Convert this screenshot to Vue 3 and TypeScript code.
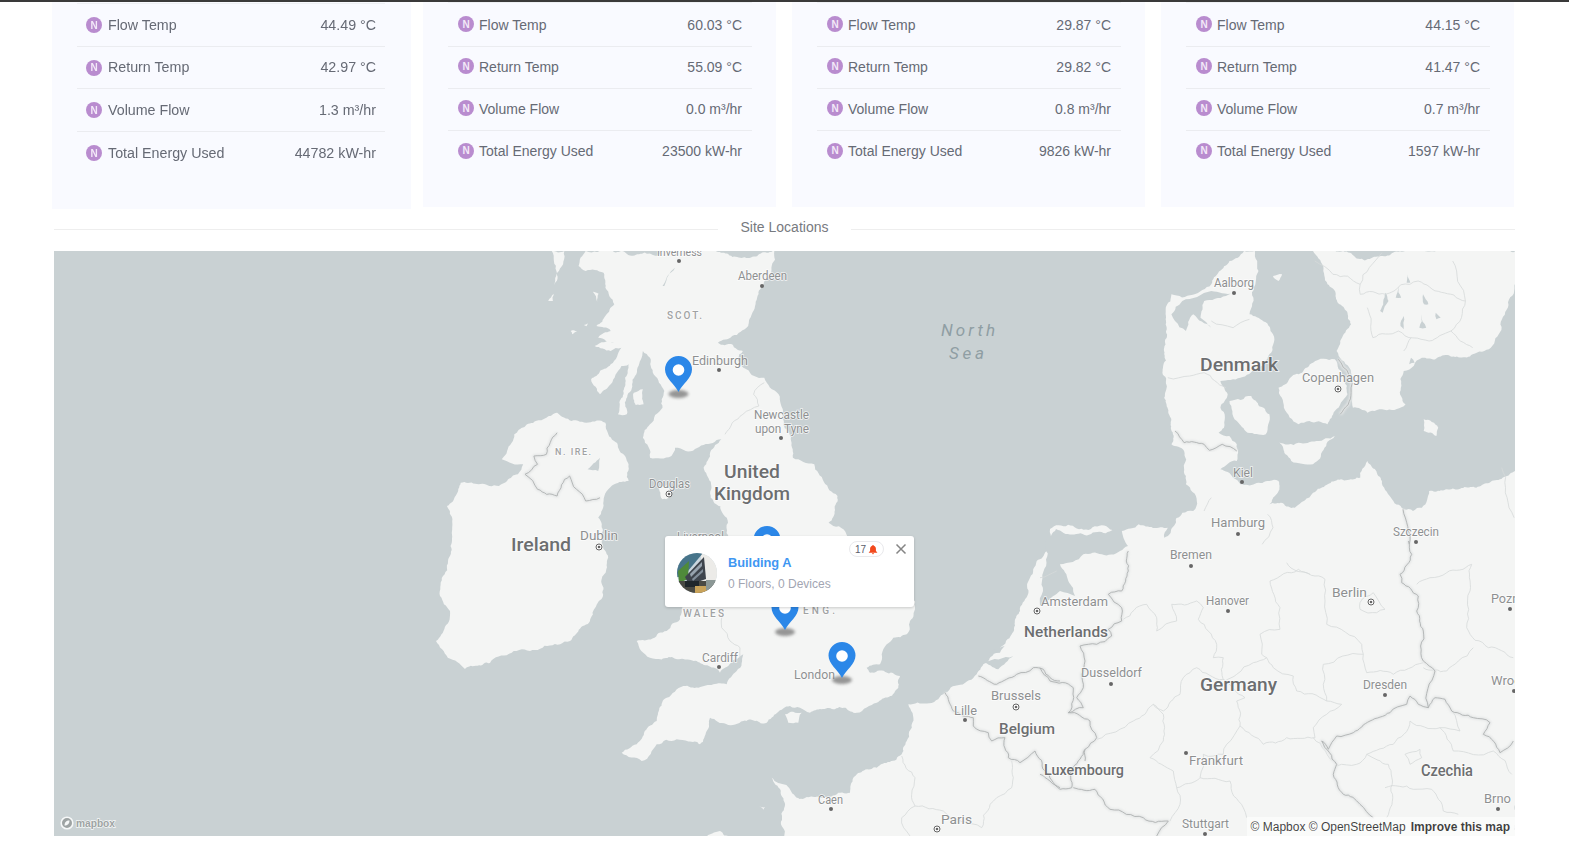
<script setup lang="ts">
type Row = { label: string; value: string }
const mk = (a: string, b: string, c: string, d: string): Row[] => [
  { label: 'Flow Temp', value: a },
  { label: 'Return Temp', value: b },
  { label: 'Volume Flow', value: c },
  { label: 'Total Energy Used', value: d }
]
const cards = [
  { cls: 'c1', rows: mk('44.49 °C', '42.97 °C', '1.3 m³/hr', '44782 kW-hr') },
  { cls: 'c2', rows: mk('60.03 °C', '55.09 °C', '0.0 m³/hr', '23500 kW-hr') },
  { cls: 'c3', rows: mk('29.87 °C', '29.82 °C', '0.8 m³/hr', '9826 kW-hr') },
  { cls: 'c4', rows: mk('44.15 °C', '41.47 °C', '0.7 m³/hr', '1597 kW-hr') }
]

const conv = (a: number[], ox: number, oy: number, sx: number, sy: number): number[] => {
  const out: number[] = []
  for (let i = 0; i < a.length; i += 2) out.push(ox + a[i] / sx, oy + a[i + 1] / sy)
  return out
}
const Z5 = (...a: number[]) => conv(a, 400, 250, 2.8, 3)
const Z6 = (...a: number[]) => conv(a, 950, 250, 2.755, 3)
const Z7 = (...a: number[]) => conv(a, 600, 540, 3, 3)
const Z8 = (...a: number[]) => conv(a, 1040, 540, 3, 3)

// Deterministic midpoint displacement: gives coasts and borders their irregular edge.
let seed = 4711
const rnd = () => {
  seed = (seed * 16807) % 2147483647
  return seed / 2147483647 - 0.5
}
const rough = (a: number[], k: number, min: number, closed: boolean): string => {
  const out: number[] = []
  const seg = (x1: number, y1: number, x2: number, y2: number) => {
    const dx = x2 - x1
    const dy = y2 - y1
    const len = Math.hypot(dx, dy)
    if (len < min) {
      out.push(x1, y1)
      return
    }
    const d = rnd() * k * 2
    const mx = (x1 + x2) / 2 - dy * d
    const my = (y1 + y2) / 2 + dx * d
    seg(x1, y1, mx, my)
    seg(mx, my, x2, y2)
  }
  const n = a.length
  for (let i = 0; i + 3 < n; i += 2) seg(a[i], a[i + 1], a[i + 2], a[i + 3])
  if (closed) seg(a[n - 2], a[n - 1], a[0], a[1])
  else out.push(a[n - 2], a[n - 1])
  return out.map((v) => v.toFixed(1)).join(' ')
}

const landRaw: number[][] = [
  [
    ...Z5(1048, 0, 1040, 50, 1018, 100, 1000, 140, 985, 190, 975, 225, 930, 255, 890, 275, 930, 280, 960, 300, 945, 325, 970, 355, 1020, 380, 1060, 430, 1070, 490, 1095, 570, 1100, 620, 1160, 640, 1225, 735, 1200, 815, 1250, 850, 1260, 900),
    880, 570, 915, 600,
    ...Z7(945, 200, 930, 240, 920, 280, 880, 290, 860, 310, 845, 340, 840, 370, 800, 380, 810, 395, 900, 405, 895, 440, 830, 485, 770, 515, 700, 505, 630, 515, 600, 500, 570, 495, 500, 545, 430, 540, 330, 530, 320, 570, 300, 610, 230, 595, 170, 610, 125, 660, 65, 635, 110, 610, 170, 540, 200, 470, 250, 435, 340, 430, 380, 430, 410, 390, 430, 340, 360, 395, 290, 360, 220, 350, 150, 350, 110, 300, 200, 270, 240, 235, 245, 205),
    682, 600, 690, 560,
    ...Z5(920, 860, 915, 800, 870, 740, 850, 650, 900, 565, 800, 600, 770, 590, 760, 615, 700, 620, 680, 560, 700, 520, 735, 470, 740, 420, 710, 370, 700, 320, 680, 300, 665, 350, 650, 400, 635, 490, 610, 490, 625, 420, 640, 340, 620, 345, 590, 400, 560, 430, 535, 385, 590, 340, 620, 290, 590, 300, 545, 285, 600, 275, 555, 260, 590, 240, 550, 225, 600, 160, 575, 110, 570, 65, 520, 60, 500, 45, 520, 0)
  ],
  Z5(425, 0, 460, 0, 445, 60, 432, 105, 438, 60),
  Z5(415, 150, 430, 128, 428, 150),
  Z5(515, 222, 532, 208, 522, 226),
  Z5(540, 122, 556, 128, 552, 152),
  Z5(478, 240, 496, 240, 482, 250),
  Z5(655, 425, 680, 415, 682, 460, 660, 462),
  Z5(725, 705, 750, 700, 755, 740, 735, 745),
  [
    ...Z5(440, 485, 480, 510, 575, 515, 615, 600, 640, 640, 640, 690, 600, 700, 570, 750, 555, 800, 565, 870),
    606, 570, 603, 595, 590, 620, 570, 640, 530, 650, 490, 662, 465, 668, 436, 640, 450, 610, 440, 595, 448, 560, 452, 530, 447, 505,
    ...Z5(170, 695, 250, 705, 300, 690, 330, 670, 345, 640, 285, 625, 300, 600, 320, 550, 380, 510, 410, 500)
  ],
  [
    ...Z7(550, 890, 515, 710, 590, 770, 660, 770, 750, 755, 760, 710, 830, 680, 905, 640, 920, 600, 925, 490, 1030, 460, 1130, 400, 1150, 370, 1200, 320, 1235, 280, 1260, 210, 1290, 110, 1310, 60, 1340, 30),
    1050, 528, 1122, 530,
    ...Z6(520, 820, 600, 830, 590, 860, 640, 785, 670, 780, 680, 750, 650, 700, 645, 600, 610, 580, 590, 440, 590, 290, 595, 210, 610, 130, 720, 100, 770, 30, 810, 0, 840, 0, 850, 60, 825, 190, 890, 250, 880, 310, 800, 380, 745, 390, 765, 430, 745, 470, 755, 530, 740, 545, 790, 580, 790, 630, 745, 655, 780, 680, 800, 700, 880, 690, 905, 690, 880, 760, 950, 770, 1000, 725, 1060, 690, 1130, 680, 1150, 630, 1190, 690, 1215, 740, 1250, 775, 1300, 770, 1320, 720, 1450, 710, 1570, 640),
    1520, 840, 780, 840
  ],
  Z7(315, 890, 360, 870, 390, 890),
  Z7(475, 795, 495, 798, 490, 806),
  Z7(555, 520, 605, 515, 595, 545, 565, 545),
  Z6(770, 450, 830, 435, 880, 490, 870, 550, 820, 545, 790, 510),
  Z6(905, 410, 970, 365, 1000, 335, 1060, 325, 1085, 380, 1095, 430, 1060, 480, 1040, 520, 990, 510, 960, 520, 920, 470),
  Z6(905, 570, 960, 575, 1010, 570, 1060, 555, 1000, 640, 940, 630),
  Z6(1305, 505, 1345, 530, 1340, 555, 1305, 540),
  Z6(1000, 0, 1040, 100, 1105, 220, 1080, 260, 1065, 300, 1100, 350, 1110, 470, 1150, 485, 1255, 460, 1250, 360, 1300, 320, 1440, 310, 1490, 290, 1570, 60, 1570, 0),
  Z6(890, 75, 915, 70, 905, 90),
  Z6(270, 885, 350, 865, 430, 840, 430, 846, 350, 871, 270, 891)
]

const waterRaw: number[][] = [
  [1045, 540, 1056, 528, 1122, 528, 1128, 545, ...Z8(240, 30, 130, 40, 60, 70, 85, 120, 105, 165, 60, 150, 20, 180, 0, 195), 1043, 590],
  Z6(610, 190, 640, 150, 720, 120, 780, 125, 760, 135, 700, 150, 690, 200, 720, 230, 670, 190, 650, 240, 620, 210),
  Z6(1185, 180, 1200, 125, 1208, 150, 1192, 185),
  Z6(1228, 140, 1235, 105, 1243, 140),
  Z6(1293, 230, 1300, 190, 1312, 230),
  Z6(1303, 130, 1318, 160, 1306, 160),
  Z6(1241, 225, 1250, 195, 1250, 235),
  Z6(1338, 185, 1352, 200, 1340, 205),
  Z6(1260, 70, 1268, 95, 1258, 95),
  Z6(1270, 320, 1280, 335, 1265, 340),
  Z5(770, 50, 735, 105, 740, 105),
  Z5(525, 655, 560, 620, 555, 660),
  Z7(1150, 360, 1240, 345, 1195, 385),
  Z7(1160, 330, 1220, 310, 1200, 335)
]

const strongRaw: number[][] = [
  Z8(1105, 0, 1115, 40, 1080, 100, 1085, 125, 1135, 165, 1130, 210, 1150, 270, 1150, 360, 1185, 390, 1165, 500),
  Z8(1165, 500, 1135, 490, 1110, 465, 1100, 490, 1050, 515, 990, 540, 940, 575, 890, 585, 865, 625, 845, 600, 890, 670, 880, 700, 910, 760, 960, 790, 1000, 830),
  Z8(1165, 500, 1185, 470, 1215, 475, 1235, 510, 1300, 530, 1350, 545, 1330, 580, 1380, 635, 1420, 600),
  Z8(265, 30, 265, 90, 245, 150, 205, 160, 245, 200, 245, 240, 205, 265, 215, 285, 170, 310, 120, 315, 135, 360, 130, 440, 110, 470, 130, 500, 85, 515),
  Z8(85, 515, 150, 540, 170, 590, 135, 625, 135, 660),
  Z8(0, 380, 30, 420, 100, 440, 85, 515),
  Z7(1135, 405, 1190, 430, 1250, 400, 1300, 380, 1330, 385, 1350, 410, 1380, 420),
  Z7(1035, 455, 1060, 510, 1120, 530, 1120, 555, 1165, 575, 1175, 600, 1215, 590, 1225, 650, 1260, 665, 1305, 630, 1335, 690, 1380, 740),
  Z8(135, 625, 100, 680, 95, 740, 60, 745, 30, 720, 0, 700),
  Z8(100, 740, 165, 745, 210, 805, 310, 830, 385, 840, 350, 885),
  Z6(620, 540, 645, 575, 700, 580, 715, 598, 750, 580, 790, 600),
  Z6(1070, 325, 1105, 425, 1075, 490),
  Z6(1248, 775, 1265, 880),
  Z5(440, 545, 410, 610, 375, 615, 385, 640, 350, 670, 385, 715, 440, 735, 475, 675, 520, 750, 560, 740)
]

const faintRaw: number[][] = [
  Z8(250, 235, 320, 190, 350, 230, 350, 270, 410, 240, 395, 190, 470, 180, 490, 200, 475, 235, 530, 310, 520, 350, 550, 350, 555, 420, 590, 400, 640, 365, 680, 350, 700, 380, 760, 405, 770, 450, 860, 480, 905, 490, 860, 520, 820, 560, 825, 590, 740, 590, 670, 610, 600, 555, 590, 480, 615, 470, 550, 415, 470, 380, 430, 410, 420, 460, 370, 510, 340, 490, 280, 540, 170, 595),
  Z8(775, 85, 690, 120, 720, 200, 720, 265, 660, 280, 665, 340, 680, 350),
  Z8(775, 85, 855, 115, 855, 180, 860, 250, 965, 310, 970, 340, 850, 370, 850, 430, 860, 480),
  Z8(970, 340, 980, 395, 1060, 400, 1150, 365),
  Z8(600, 555, 560, 610, 550, 640, 490, 640, 480, 710, 410, 740, 420, 790, 390, 840),
  Z8(340, 490, 370, 520, 370, 600, 330, 650, 400, 690, 410, 740),
  Z8(480, 710, 570, 720, 610, 800, 620, 830),
  Z8(820, 590, 890, 670),
  Z8(980, 640, 1060, 610, 1110, 540, 1200, 560, 1240, 630, 1360, 630, 1415, 700),
  Z8(980, 640, 950, 670, 890, 675),
  Z8(1045, 670, 1040, 830),
  Z8(1035, 740, 1120, 745, 1175, 745, 1210, 810, 1255, 820),
  Z8(980, 640, 1045, 670),
  Z8(1235, 510, 1260, 570, 1200, 560),
  Z8(1095, 640, 1140, 625, 1145, 650, 1110, 670, 1095, 640),
  Z8(1130, 130, 1170, 110, 1220, 95, 1295, 70, 1290, 150, 1280, 260, 1345, 320, 1420, 350),
  Z8(1150, 380, 1220, 390, 1255, 360, 1300, 320),
  Z8(740, 65, 810, 100),
  Z8(960, 185, 1000, 155, 1035, 205, 1010, 215, 960, 205, 960, 185),
  Z8(0, 110, 50, 90),
  Z7(905, 645, 945, 710, 935, 760, 945, 795, 905, 830, 930, 885),
  Z7(945, 795, 1030, 810, 1145, 860, 1170, 790, 1190, 770, 1235, 740, 1235, 660),
  Z7(370, 215, 365, 260, 390, 300, 420, 320, 420, 350),
  Z5(1020, 395, 990, 430, 1005, 465, 960, 490, 910, 550),
  Z6(1005, 30, 1055, 70, 1130, 100, 1190, 5),
  Z6(1130, 100, 1130, 130, 1200, 130, 1290, 90, 1420, 150, 1380, 240, 1440, 290),
  Z6(1150, 170, 1165, 260, 1235, 240, 1320, 270, 1380, 240),
  Z6(1270, 260, 1250, 300),
  Z6(1385, 30, 1420, 150),
  Z6(600, 380, 660, 375, 700, 365, 760, 410),
  Z6(720, 210, 780, 230, 825, 205),
  Z6(875, 790, 890, 830, 860, 880),
  Z6(720, 740, 700, 780),
  Z6(1520, 650, 1540, 770, 1554, 800)
]

const land = landRaw.map((a) => rough(a, 0.14, 3, true))
const water = waterRaw.map((a) => rough(a, 0.12, 4, true))
const strong = strongRaw.map((a) => rough(a, 0.13, 5, false))
const faint = faintRaw.map((a) => rough(a, 0.12, 6, false))

type Label = [string, number, number, number, number, string]
const labels: Label[] = [
  ['Inverness', 657, 255, 45, 11, 'c'],
  ['Aberdeen', 738, 279, 49, 12, 'c'],
  ['SCOT.', 667, 318, 35, 10, 'r'],
  ['Edinburgh', 692, 364, 56, 13, 'c'],
  ['North', 941, 335, 54, 17, 's'],
  ['Sea', 949, 358, 35, 17, 's'],
  ['Newcastle', 754, 418, 55, 12, 'c'],
  ['upon Tyne', 755, 432, 54, 12, 'c'],
  ['N. IRE.', 555, 454, 36, 9, 'r'],
  ['United', 724, 477, 56, 19, 'k'],
  ['Kingdom', 714, 499, 76, 19, 'k'],
  ['Douglas', 649, 487, 41, 12, 'c'],
  ['Ireland', 511, 550, 60, 19, 'k'],
  ['Dublin', 580, 539, 38, 13, 'c'],
  ['Liverpool', 677, 540, 47, 12, 'c'],
  ['WALES', 683, 616, 41, 10, 'r'],
  ['ENG.', 803, 613, 32, 10, 'r'],
  ['Cardiff', 702, 661, 36, 12, 'c'],
  ['London', 794, 678, 41, 13, 'c'],
  ['Caen', 818, 803, 25, 12, 'c'],
  ['Paris', 941, 823, 31, 13, 'c'],
  ['Lille', 954, 714, 23, 12, 'c'],
  ['Brussels', 991, 699, 50, 13, 'c'],
  ['Belgium', 999, 733, 56, 15, 'k'],
  ['Luxembourg', 1044, 774, 80, 14, 'k'],
  ['Amsterdam', 1041, 605, 67, 13, 'c'],
  ['Netherlands', 1024, 636, 84, 15, 'k'],
  ['Dusseldorf', 1081, 676, 61, 13, 'c'],
  ['Germany', 1200, 690, 77, 19, 'k'],
  ['Hanover', 1206, 604, 43, 12, 'c'],
  ['Bremen', 1170, 558, 42, 12, 'c'],
  ['Hamburg', 1211, 526, 54, 13, 'c'],
  ['Kiel', 1233, 476, 20, 12, 'c'],
  ['Szczecin', 1393, 535, 46, 12, 'c'],
  ['Berlin', 1332, 596, 35, 13, 'c'],
  ['Dresden', 1363, 688, 44, 12, 'c'],
  ['Poznan', 1491, 602, 42, 12, 'c'],
  ['Wroclaw', 1491, 684, 50, 12, 'c'],
  ['Frankfurt', 1189, 764, 54, 13, 'c'],
  ['Czechia', 1421, 775, 52, 16, 'k'],
  ['Brno', 1484, 802, 27, 12, 'c'],
  ['Stuttgart', 1182, 827, 47, 12, 'c'],
  ['Aalborg', 1214, 286, 40, 12, 'c'],
  ['Denmark', 1200, 370, 78, 19, 'k'],
  ['Copenhagen', 1302, 381, 72, 13, 'c']
]
const spaced = (kind: string) => (kind === 'r' || kind === 's' ? 'spacing' : 'spacingAndGlyphs')

const dots: [number, number][] = [
  [679, 260], [762, 285], [719, 369], [781, 437], [719, 666], [831, 808], [965, 719], [1111, 683],
  [1228, 610], [1191, 565], [1238, 533], [1242, 481], [1416, 541], [1385, 694], [1510, 608], [1514, 690],
  [1186, 752], [1498, 808], [1205, 833], [1234, 292]
]
const caps: [number, number][] = [
  [669, 493], [599, 546], [937, 828], [1016, 706], [1037, 610], [1371, 601], [1338, 388]
]
const pins: [number, number][] = [
  [678.5, 391], [767, 561], [785, 629], [842, 677]
]
</script>

<template>
  <div class="page">
    <div class="topbar"></div>
    <div class="cards">
      <section v-for="card in cards" :key="card.cls" class="card" :class="card.cls">
        <ul class="list">
          <li v-for="row in card.rows" :key="row.label" class="row">
            <span class="name"><i class="badge-n">N</i>{{ row.label }}</span>
            <span class="val">{{ row.value }}</span>
          </li>
        </ul>
      </section>
    </div>

    <div class="divider">
      <span class="rule"></span>
      <span class="divider-text">Site Locations</span>
      <span class="rule"></span>
    </div>

    <div class="map">
      <svg class="map-svg" viewBox="54 250 1461 585" width="1461" height="585">
        <defs>
          <filter id="soft" x="-60%" y="-100%" width="220%" height="300%">
            <feGaussianBlur stdDeviation="1.6" />
          </filter>
          <filter id="halo" x="-5%" y="-5%" width="110%" height="110%">
            <feGaussianBlur stdDeviation="0.9" />
          </filter>
        </defs>
        <rect x="54" y="250" width="1461" height="585" fill="#c9d1d3" />
        <polygon v-for="(p, i) in land" :key="'l' + i" :points="p" fill="#f4f5f4" />
        <polygon v-for="(p, i) in water" :key="'w' + i" :points="p" fill="#c9d1d3" />
        <g fill="none" stroke-linejoin="round">
          <polyline v-for="(p, i) in faint" :key="'f' + i" :points="p" stroke="#d6d9d9" stroke-width="0.8" />
          <polyline v-for="(p, i) in strong" :key="'h' + i" :points="p" stroke="#e4e6e6" stroke-width="3.2" filter="url(#halo)" />
          <polyline v-for="(p, i) in strong" :key="'t' + i" :points="p" stroke="#afb2b2" stroke-width="0.9" />
        </g>
        <circle v-for="(d, i) in dots" :key="'d' + i" :cx="d[0]" :cy="d[1]" r="2" fill="#666" />
        <g v-for="(d, i) in caps" :key="'c' + i">
          <circle :cx="d[0]" :cy="d[1]" r="3" fill="#fff" stroke="#666" stroke-width="1" />
          <circle :cx="d[0]" :cy="d[1]" r="1.3" fill="#666" />
        </g>
        <text
          v-for="l in labels"
          :key="l[0]"
          :class="'lbl lbl-' + l[5]"
          :x="l[1]"
          :y="l[2]"
          :textLength="l[3]"
          :font-size="l[4]"
          :lengthAdjust="spaced(l[5])"
        >{{ l[0] }}</text>
        <g v-for="(p, i) in pins" :key="'p' + i" :transform="`translate(${p[0]} ${p[1]})`">
          <ellipse cx="0" cy="2" rx="10" ry="4" fill="#6d6d6d" opacity="0.7" filter="url(#soft)" />
          <path d="M0 0C-4-8-13.5-14-13.5-22.5A13.5 13.5 0 1 1 13.5-22.5C13.5-14 4-8 0 0Z" fill="#2b87e8" />
          <circle cx="0" cy="-22" r="5.8" fill="#fff" />
        </g>
      </svg>

      <div class="popup">
        <svg class="photo" viewBox="0 0 40 40" width="40" height="40">
          <defs>
            <clipPath id="round"><circle cx="20" cy="20" r="20" /></clipPath>
          </defs>
          <g clip-path="url(#round)">
            <rect width="40" height="40" fill="#c9d6de" />
            <rect x="24" width="16" height="40" fill="#ecebe8" />
            <polygon points="0,0 26,0 6,24 0,24" fill="#47748a" />
            <polygon points="1,18 12,8 11,26 2,30" fill="#4f8a3a" />
            <polygon points="8,24 27,4 29,26 12,32" fill="#3e444c" />
            <polygon points="13,21 25,9 25,13 14,24" fill="#97a3ae" />
            <polygon points="15,26 26,16 26,19 16,28" fill="#828e9a" />
            <rect x="0" y="28" width="40" height="12" fill="#4a4a44" />
            <rect x="8" y="28" width="14" height="6" fill="#20272c" />
            <rect x="18" y="33" width="12" height="7" fill="#c9a35a" />
            <rect x="29" y="27" width="11" height="10" fill="#8b9795" />
          </g>
        </svg>
        <div class="pop-body">
          <div class="pop-title">Building A</div>
          <div class="pop-sub">0 Floors, 0 Devices</div>
        </div>
        <div class="alarm">
          <span>17</span>
          <svg viewBox="0 0 12 12" width="10" height="11">
            <path d="M6 .6C6.6.6 6.9 1 7 1.5 8.7 2 9.5 3.4 9.5 5.2V7.8L11 9.4V10H1V9.4L2.5 7.8V5.2C2.5 3.4 3.3 2 5 1.5 5.1 1 5.4.6 6 .6Z" fill="#f2491d" />
            <path d="M4.7 10.5H7.3A1.3 1.3 0 0 1 4.7 10.5Z" fill="#f2491d" />
          </svg>
        </div>
        <svg class="close" viewBox="0 0 12 12" width="12" height="12">
          <path d="M1.5 1.5L10.5 10.5M10.5 1.5L1.5 10.5" stroke="#858585" stroke-width="1.5" fill="none" />
        </svg>
      </div>

      <svg class="logo" viewBox="0 0 60 16" width="60" height="16">
        <circle cx="8" cy="8" r="5.8" fill="#9da3a3" stroke="#f6f8f8" stroke-width="1.6" />
        <path d="M5.5 10.5C5.5 7.5 7 5.5 10.5 5.5 10.5 9 8.5 10.5 5.5 10.5Z" fill="#f6f8f8" />
        <text class="logo-text" x="17" y="12" textLength="39" lengthAdjust="spacingAndGlyphs">mapbox</text>
      </svg>

      <div class="attrib">
        <span>© Mapbox © OpenStreetMap</span>
        <b>Improve this map</b>
      </div>
    </div>
  </div>
</template>

<style>
html, body { margin: 0; background: #fff; }
</style>

<style scoped>
.page {
  height: 856px;
  overflow: hidden;
  font-family: "Liberation Sans", Arial, sans-serif;
  background: #fff;
}
.topbar { height: 2px; background: #3a3a3a; }
.cards {
  display: flex;
  align-items: flex-start;
  height: 207px;
  padding-left: 52px;
}
.card {
  box-sizing: border-box;
  width: 353px;
  height: 205px;
  padding: 0 24px 0 25px;
  background: #f9faff;
}
.c1 { width: 359px; height: 207px; padding: 1px 26px 0 25px; margin-right: 12px; }
.c2 { margin-right: 16px; }
.c3 { margin-right: 16px; }
.list {
  list-style: none;
  margin: 0;
  padding: 2px 0 0;
  border-top: 1px solid #eef0f4;
}
.c1 .list { padding-top: 0; }
.row {
  box-sizing: border-box;
  display: flex;
  align-items: center;
  justify-content: space-between;
  height: 42px;
  padding: 0 10px 2px 9px;
  border-bottom: 1px solid #ebecf0;
  font-size: 14px;
  color: #666a75;
}
.c1 .row {
  height: 42.5px;
  padding: 0 9px 0 9px;
  font-size: 14.25px;
  filter: blur(0.3px);
}
.row:last-child { border-bottom: none; }
.name { display: flex; align-items: center; }
.badge-n {
  display: flex;
  align-items: center;
  justify-content: center;
  width: 16px;
  height: 16px;
  margin: -1px 5px 0 1px;
  border-radius: 50%;
  background: #b98ccf;
  color: #f3e9f8;
  font-size: 10px;
  font-weight: 700;
  font-style: normal;
}
.c1 .badge-n { margin: 1px 6px 0 0; }
.val { color: #666a75; }
.divider {
  display: flex;
  align-items: center;
  width: 1461px;
  height: 20px;
  margin: 8px 0 14px 54px;
}
.rule {
  flex: 1;
  height: 1px;
  margin-top: 4px;
  background: #eeeeee;
}
.divider-text {
  padding: 0 23px;
  font-size: 14px;
  color: #777a80;
}
.map {
  position: relative;
  width: 1461px;
  height: 585px;
  margin-left: 54px;
  overflow: hidden;
  background: #c9d1d3;
}
.map-svg { display: block; }
.lbl {
  font-family: Roboto, "Liberation Sans", sans-serif;
  paint-order: stroke;
  stroke: rgba(255, 255, 255, 0.75);
  stroke-width: 1.5px;
  fill: #8e9091;
}
.lbl-k { fill: #6c6e70; font-weight: 500; }
.lbl-r { fill: #a0a2a3; font-weight: 500; }
.lbl-s { fill: #8f9ea3; font-style: italic; stroke: none; }
.popup {
  position: absolute;
  left: 611px;
  top: 285px;
  box-sizing: border-box;
  display: flex;
  align-items: center;
  width: 249px;
  height: 71px;
  padding: 0 0 0 12px;
  background: #fff;
  border-radius: 3px;
  box-shadow: 0 1px 3px rgba(0, 0, 0, 0.18);
}
.photo { flex: none; margin-top: 2px; }
.pop-body { margin-left: 11px; margin-top: 2px; }
.pop-title {
  font-size: 12.8px;
  font-weight: 700;
  line-height: 18px;
  color: #3f97f2;
}
.pop-sub {
  margin-top: 4px;
  font-size: 12px;
  line-height: 16px;
  color: #a2a5b2;
}
.alarm {
  position: absolute;
  left: 184px;
  top: 5px;
  box-sizing: border-box;
  display: flex;
  align-items: center;
  justify-content: center;
  gap: 2px;
  width: 35px;
  height: 16px;
  border: 1px solid #e9e9ec;
  border-radius: 8px;
  font-size: 10px;
  color: #5a5e6c;
}
.close { position: absolute; left: 230px; top: 7px; }
.logo { position: absolute; left: 5px; bottom: 5px; }
.logo-text {
  font-family: "Liberation Sans", sans-serif;
  font-size: 11px;
  font-weight: 700;
  fill: #9da3a3;
  stroke: #f6f8f8;
  stroke-width: 1.4px;
  paint-order: stroke;
}
.attrib {
  position: absolute;
  right: 0;
  bottom: 0;
  box-sizing: border-box;
  display: flex;
  align-items: center;
  gap: 5px;
  height: 19px;
  padding: 0 5px 0 4px;
  background: rgba(255, 255, 255, 0.55);
  font-size: 12px;
  color: rgba(0, 0, 0, 0.75);
  white-space: nowrap;
}
.attrib b { font-weight: 700; }
</style>
